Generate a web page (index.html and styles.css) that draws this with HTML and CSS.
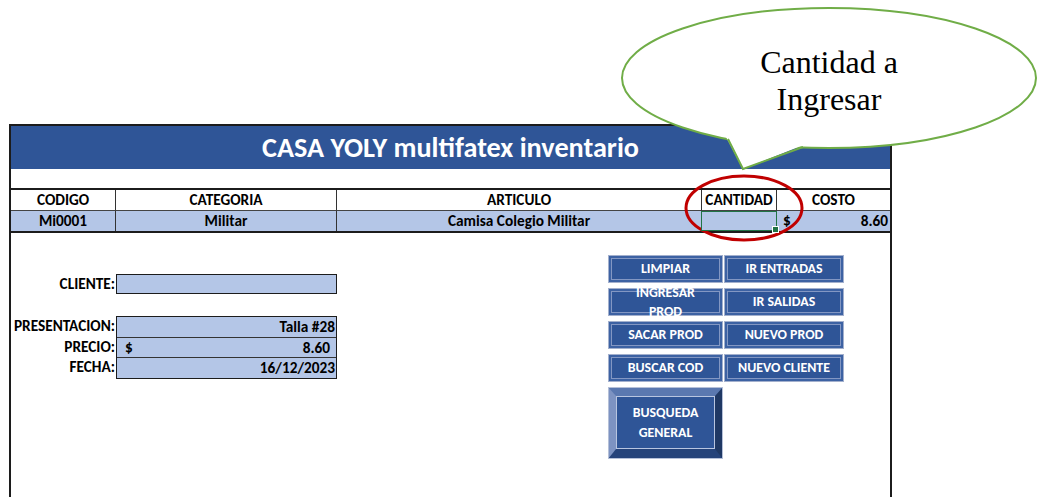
FILE: index.html
```html
<!DOCTYPE html>
<html lang="es">
<head>
  <meta charset="UTF-8" />
  <meta name="viewport" content="width=device-width, initial-scale=1.0" />
  <title>CASA YOLY multifatex inventario</title>
  <link rel="stylesheet" href="styles.css">
</head>
<body>

  <div class="sheet">
    <header class="banner">CASA YOLY multifatex inventario</header>

    <div class="grid">
      <div class="cell head">CODIGO</div>
      <div class="cell head">CATEGORIA</div>
      <div class="cell head">ARTICULO</div>
      <div class="cell head qty-head">CANTIDAD</div>
      <div class="cell head last">COSTO</div>

      <div class="cell data">Mi0001</div>
      <div class="cell data">Militar</div>
      <div class="cell data">Camisa Colegio Militar</div>
      <div class="cell data qty-input"><span class="handle"></span></div>
      <div class="cell data money last"><span>$</span><span>8.60</span></div>
    </div>

    <div class="work">
      <div class="form">
        <div class="row">
          <label class="lbl">CLIENTE:</label>
          <div class="field"></div>
        </div>

        <div class="group">
          <div class="labels">
            <span class="lbl">PRESENTACION:</span>
            <span class="lbl">PRECIO:</span>
            <span class="lbl">FECHA:</span>
          </div>
          <div class="box">
            <div class="val right">Talla #28</div>
            <div class="val money"><span>$</span><span>8.60</span></div>
            <div class="val right">16/12/2023</div>
          </div>
        </div>
      </div>

      <div class="buttons">
        <div class="btn" role="button">LIMPIAR</div>
        <div class="btn" role="button">IR ENTRADAS</div>
        <div class="btn two-line" role="button"><span>INGRESAR<br>PROD</span></div>
        <div class="btn" role="button">IR SALIDAS</div>
        <div class="btn" role="button">SACAR PROD</div>
        <div class="btn" role="button">NUEVO PROD</div>
        <div class="btn" role="button">BUSCAR COD</div>
        <div class="btn" role="button">NUEVO CLIENTE</div>
        <div class="btn-big" role="button"><span>BUSQUEDA<br>GENERAL</span></div>
      </div>
    </div>
  </div>

  <!-- callout + highlight drawn on top of the sheet -->
  <svg class="overlay" width="1037" height="497" viewBox="0 0 1037 497">
    <ellipse cx="829" cy="78" rx="207" ry="70" fill="#fff" stroke="#70ad47" stroke-width="2"/>
    <polygon points="725,135 743,169 806,144" fill="#fff"/>
    <polyline points="728,139 743,169 803,147" fill="none" stroke="#70ad47" stroke-width="2" stroke-linejoin="miter"/>
    <ellipse cx="744" cy="208" rx="58" ry="32" fill="none" stroke="#c00000" stroke-width="3"/>
  </svg>
  <div class="callout-text">Cantidad a<br>Ingresar</div>

</body>
</html>
```

FILE: styles.css
```css
body {
  margin: 0;
  background: #fff;
  color: #000;
  font-family: Carlito, Calibri, "Liberation Sans Narrow", "Liberation Sans", sans-serif;
  width: 1037px;
  height: 497px;
  overflow: hidden;
  position: relative;
}

.sheet {
  margin: 124px 0 0 9px;
  width: 883px;
  height: 373px;
  box-sizing: border-box;
  border: 2px solid #1c1c1c;
  border-bottom: none;
}

.banner {
  height: 43px;
  background: #2f5597;
  color: #fff;
  font-size: 28.2px;
  font-weight: bold;
  display: flex;
  align-items: center;
  justify-content: center;
  padding-bottom: 1px;
  box-sizing: border-box;
}

.grid {
  margin-top: 19px;
  display: grid;
  grid-template-columns: 105px 221px 365px 75px 1fr;
  border-top: 2px solid #1c1c1c;
  border-bottom: 2px solid #1c1c1c;
  font-size: 15.3px;
  font-weight: bold;
}

.cell {
  height: 20px;
  line-height: 20px;
  text-align: center;
  border-right: 1px solid #333;
}

.cell.last { border-right: none; }

.cell.head { border-bottom: 1px solid #444; }

.cell.qty-head { border-left: 1px solid #333; margin-left: -1px; }

.cell.data { background: #b4c6e7; }

.cell.qty-input {
  position: relative;
  z-index: 1;
  box-sizing: border-box;
  border: 1.5px solid #217346;
  margin-left: -1px;
}

.handle {
  position: absolute;
  right: -3px;
  bottom: -3px;
  width: 5px;
  height: 5px;
  background: #217346;
  border: 1px solid #fff;
}

.money {
  display: flex;
  justify-content: space-between;
  padding: 0 6px 0 8px;
}

.cell.money { padding: 0 2px 0 6px; }

.work {
  display: flex;
  align-items: flex-start;
}

.form {
  margin-top: 41px;
  width: 326px;
  font-size: 15.3px;
  font-weight: bold;
}

.row {
  display: flex;
  align-items: center;
}

.lbl {
  width: 104px;
  text-align: right;
  padding-right: 1px;
  display: block;
  height: 20px;
  line-height: 20px;
  white-space: nowrap;
}

.field {
  width: 221px;
  height: 20px;
  box-sizing: border-box;
  border: 1.5px solid #1c1c1c;
  background: #b4c6e7;
}

.group {
  display: flex;
  margin-top: 22px;
}

.labels span { height: 20.5px; line-height: 20.5px; }

.box {
  width: 221px;
  box-sizing: border-box;
  border: 1.5px solid #1c1c1c;
  background: #b4c6e7;
}

.val {
  height: 19.5px;
  line-height: 19.5px;
  border-bottom: 1px solid #333;
}

.val:last-child { border-bottom: none; }

.val.right {
  text-align: right;
  padding-right: 1px;
}

.buttons {
  margin: 22px 0 0 271px;
  display: grid;
  grid-template-columns: 115px 120px;
  grid-auto-rows: 28px;
  column-gap: 1px;
  row-gap: 5px;
}

.btn {
  display: flex;
  align-items: center;
  justify-content: center;
  text-align: center;
  font-size: 13.9px;
  font-weight: bold;
  color: #fff;
  background: #2f5597;
  border: 1px solid #a3b0cd;
  box-shadow: inset 0 0 0 2px #3d62a3, inset 0 0 0 3px #8397c3;
  line-height: 16px;
  cursor: pointer;
}

/* label spills over the button edges, keep it above the next row */
.btn.two-line {
  position: relative;
  z-index: 1;
  line-height: 19px;
}

.btn-big {
  grid-row: span 2;
  height: 72px;
  box-sizing: border-box;
  font-size: 13.9px;
  font-weight: bold;
  color: #fff;
  background: #2f5597;
  border-style: solid;
  border-width: 9px 8px 10px 8px;
  border-color: #5a78b0 #1f3864 #25437a #7d93c2;
  outline: 1px solid #b5c0d8;
  outline-offset: -1px;
  cursor: pointer;
}

.btn-big span {
  display: flex;
  align-items: center;
  justify-content: center;
  text-align: center;
  height: 100%;
  line-height: 20px;
  box-sizing: border-box;
  border: 1px solid #b8c5e0;
}

.overlay {
  position: absolute;
  top: 0;
  left: 0;
  pointer-events: none;
}

.callout-text {
  position: absolute;
  left: 729px;
  top: 44px;
  width: 200px;
  text-align: center;
  font-family: "Liberation Serif", "Times New Roman", serif;
  font-size: 32px;
  line-height: 37px;
}
```
